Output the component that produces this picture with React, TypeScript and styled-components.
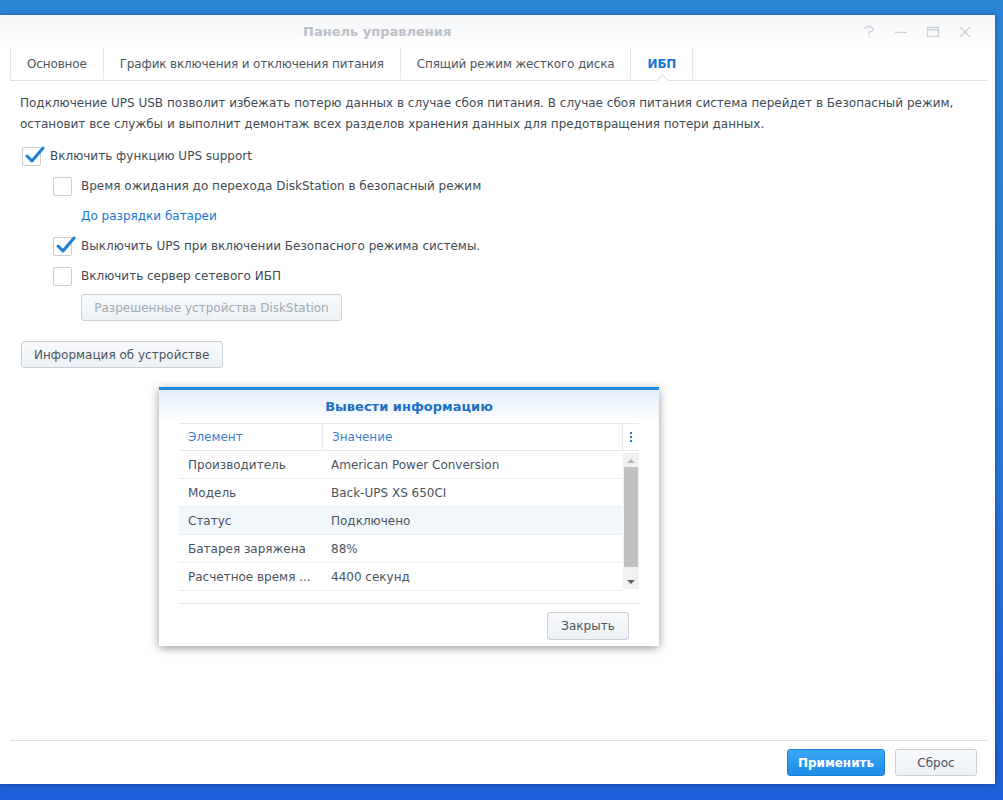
import React from 'react';
import styled, { createGlobalStyle, css } from 'styled-components';

const GlobalStyle = createGlobalStyle`
  html, body {
    margin: 0;
    padding: 0;
  }
  body {
    font-family: 'DejaVu Sans', Verdana, sans-serif;
    font-size: 12px;
    color: #414b55;
  }
  * {
    box-sizing: border-box;
  }
`;

const Desktop = styled.div`
  width: 1003px;
  height: 800px;
  padding: 15px 8px 16px 0;
  background: linear-gradient(180deg, #2b87d8 0%, #2a7ad8 50%, #1f5fd9 100%);
  overflow: hidden;
`;

const Window = styled.div`
  position: relative;
  height: 100%;
  display: flex;
  flex-direction: column;
  background: #fff;
  box-shadow: 0 0 6px rgba(0, 0, 0, 0.35);
`;

const TitleBar = styled.div`
  height: 33px;
  display: flex;
  align-items: center;
  padding-left: 303px;
  padding-right: 14px;
  background: linear-gradient(180deg, #f5f6f8 0%, #ffffff 100%);
`;

const Title = styled.div`
  flex: 1;
  font-weight: bold;
  font-size: 13px;
  color: #b9c0c7;
`;

const Controls = styled.div`
  display: flex;
  align-items: center;
`;

const ControlButton = styled.span`
  width: 32px;
  height: 20px;
  display: flex;
  align-items: center;
  justify-content: center;
  color: #cdd2d7;
`;

const TabBar = styled.div`
  display: flex;
  align-items: flex-end;
  height: 33px;
  margin: 0 8px 0 10px;
  border-bottom: 1px solid #dcdfe3;
`;

const Tab = styled.div<{ $active?: boolean; $first?: boolean }>`
  position: relative;
  height: 31px;
  padding: 0 16px;
  display: flex;
  align-items: center;
  margin-bottom: 1px;
  border-right: 1px solid #e4e7ea;
  white-space: nowrap;
  letter-spacing: -0.15px;
  ${(p) => p.$first && css`border-left: 1px solid #e4e7ea;`}
  color: #4d5761;
  ${(p) =>
    p.$active &&
    css`
      color: #1b74cf;
      font-weight: bold;
      &::after {
        content: '';
        position: absolute;
        left: 50%;
        bottom: -6px;
        width: 8px;
        height: 8px;
        margin-left: -4px;
        background: #fff;
        border-left: 1px solid #dcdfe3;
        border-top: 1px solid #dcdfe3;
        transform: rotate(45deg);
      }
    `}
`;

const Content = styled.div`
  flex: 1;
  padding: 12px 20px 0 20px;
  display: flex;
  flex-direction: column;
  align-items: flex-start;
`;

const Description = styled.p`
  margin: 0 0 6px 0;
  line-height: 21px;
  color: #414b55;
`;

const OptionRow = styled.label<{ $indent?: boolean }>`
  height: 30px;
  display: flex;
  align-items: center;
  gap: 9px;
  padding-left: ${(p) => (p.$indent ? 33 : 2)}px;
  color: #414b55;
`;

const Box = styled.span`
  position: relative;
  width: 19px;
  height: 19px;
  border: 1px solid #c9ced3;
  border-radius: 2px;
  background: #fff;
  flex-shrink: 0;
`;

const Tick = styled.svg`
  position: absolute;
  left: 1px;
  top: -3px;
`;

const LinkRow = styled.div`
  height: 30px;
  display: flex;
  align-items: center;
  padding-left: 61px;
  color: #1a78d0;
`;

const Button = styled.button<{ $primary?: boolean }>`
  height: 27px;
  padding: 0 14px;
  border-radius: 3px;
  font-family: inherit;
  font-size: 12px;
  white-space: nowrap;
  border: 1px solid #c8d0d8;
  background: linear-gradient(180deg, #f8fafc 0%, #edf1f5 100%);
  color: #4b555f;
  ${(p) =>
    p.$primary &&
    css`
      border-color: #1a80d6;
      background: linear-gradient(180deg, #39a6f3 0%, #1f8ce8 100%);
      color: #fff;
      font-weight: bold;
    `}
  &:disabled {
    color: #a3abb3;
  }
`;

const AllowedButton = styled(Button)`
  margin: 3px 0 0 61px;
  min-width: 261px;
  padding: 0 12px;
`;

const InfoButton = styled(Button)`
  margin: 20px 0 0 1px;
  min-width: 201px;
  padding: 0 12px;
`;

const Footer = styled.div`
  margin: 0 8px 0 10px;
  padding: 8px 10px 8px 0;
  border-top: 1px solid #dedfe1;
  display: flex;
  justify-content: flex-end;
  gap: 10px;
`;

const FooterButton = styled(Button)`
  width: ${(p) => (p.$primary ? 98 : 82)}px;
  padding: 0;
`;

/* dialog */

const Dialog = styled.div`
  position: absolute;
  left: 159px;
  top: 372px;
  width: 500px;
  height: 259px;
  background: #fff;
  border-top: 3px solid #1d8ae0;
  box-shadow: 0 2px 9px rgba(0, 0, 0, 0.4);
  display: flex;
  flex-direction: column;
`;

const DialogHeader = styled.div`
  height: 33px;
  display: flex;
  align-items: center;
  justify-content: center;
  background: linear-gradient(180deg, #e2eefa 0%, #ffffff 100%);
  font-weight: bold;
  font-size: 13px;
  color: #1a6fc6;
`;

const Grid = styled.div`
  margin: 0 20px;
  border-top: 1px solid #e6e9ec;
`;

const HeadRow = styled.div`
  height: 27px;
  display: grid;
  grid-template-columns: 143px 300px 1fr;
  border-bottom: 1px solid #e6e9ec;
  color: #3a7fcd;
`;

const HeadCell = styled.div<{ $sep?: boolean }>`
  display: flex;
  align-items: center;
  padding-left: 9px;
  ${(p) => p.$sep && css`border-left: 1px solid #e6e9ec;`}
`;

const MenuCell = styled.div`
  display: flex;
  align-items: center;
  justify-content: center;
  border-left: 1px solid #e6e9ec;
  color: #1e78d2;
`;

const Body = styled.div`
  display: flex;
  height: 140px;
`;

const Rows = styled.div`
  flex: 1;
  min-width: 0;
`;

const Row = styled.div<{ $hl?: boolean }>`
  height: 28px;
  display: grid;
  grid-template-columns: 143px minmax(0, 1fr);
  border-bottom: 1px solid #eceef0;
  background: ${(p) => (p.$hl ? '#f2f7fc' : '#fff')};
  color: #4a545e;
`;

const Cell = styled.div`
  padding-left: 9px;
  line-height: 28px;
  white-space: nowrap;
`;

const ScrollBar = styled.div`
  width: 16px;
  margin: 2px 0 2px 1px;
  background: #f1f1f1;
  display: flex;
  flex-direction: column;
  align-items: center;
`;

const Arrow = styled.div`
  height: 14px;
  display: flex;
  align-items: center;
  justify-content: center;
`;

const Thumb = styled.div`
  width: 14px;
  height: 100px;
  background: #c1c1c1;
`;

const ScrollGap = styled.div`
  flex: 1;
`;

const DialogFooter = styled.div`
  margin: 12px 20px 0 20px;
  padding: 8px 10px 0 0;
  border-top: 1px solid #e0e2e4;
  display: flex;
  justify-content: flex-end;
`;

const CloseButton = styled(Button)`
  width: 82px;
  height: 28px;
  padding: 0;
`;

const Check = ({ checked }: { checked?: boolean }) => (
  <Box>
    {checked && (
      <Tick width="22" height="20" viewBox="0 0 22 20">
        <path d="M3 11 L8 16 L19 3" fill="none" stroke="#1b80d8" strokeWidth="3" strokeLinecap="round" strokeLinejoin="round" />
      </Tick>
    )}
  </Box>
);

const rows = [
  ['Производитель', 'American Power Conversion'],
  ['Модель', 'Back-UPS XS 650CI'],
  ['Статус', 'Подключено'],
  ['Батарея заряжена', '88%'],
  ['Расчетное время ...', '4400 секунд'],
];

const App = () => {
  return (
    <>
      <GlobalStyle />
      <Desktop>
        <Window>
          <TitleBar>
            <Title>Панель управления</Title>
            <Controls>
              <ControlButton>
                <svg width="14" height="14" viewBox="0 0 14 14">
                  <path d="M3 4 Q3 1.5 7 1.5 Q11 1.5 11 4.5 Q11 6.5 7 7 L7 9.5" fill="none" stroke="currentColor" strokeWidth="1.4" />
                  <rect x="6.3" y="11.3" width="1.4" height="1.4" fill="currentColor" />
                </svg>
              </ControlButton>
              <ControlButton>
                <svg width="14" height="14" viewBox="0 0 14 14">
                  <line x1="1" y1="7.5" x2="13" y2="7.5" stroke="currentColor" strokeWidth="1.4" />
                </svg>
              </ControlButton>
              <ControlButton>
                <svg width="14" height="14" viewBox="0 0 14 14">
                  <rect x="1.5" y="2.5" width="11" height="9" fill="none" stroke="currentColor" strokeWidth="1.4" />
                  <line x1="1.5" y1="5" x2="12.5" y2="5" stroke="currentColor" strokeWidth="1.4" />
                </svg>
              </ControlButton>
              <ControlButton>
                <svg width="14" height="14" viewBox="0 0 14 14">
                  <path d="M2 2 L12 12 M12 2 L2 12" stroke="currentColor" strokeWidth="1.4" />
                </svg>
              </ControlButton>
            </Controls>
          </TitleBar>

          <TabBar>
            <Tab $first>Основное</Tab>
            <Tab>График включения и отключения питания</Tab>
            <Tab>Спящий режим жесткого диска</Tab>
            <Tab $active>ИБП</Tab>
          </TabBar>

          <Content>
            <Description>
              Подключение UPS USB позволит избежать потерю данных в случае сбоя питания. В случае сбоя питания система перейдет в Безопасный режим,
              <br />
              остановит все службы и выполнит демонтаж всех разделов хранения данных для предотвращения потери данных.
            </Description>
            <OptionRow>
              <Check checked />
              Включить функцию UPS support
            </OptionRow>
            <OptionRow $indent>
              <Check />
              Время ожидания до перехода DiskStation в безопасный режим
            </OptionRow>
            <LinkRow>До разрядки батареи</LinkRow>
            <OptionRow $indent>
              <Check checked />
              Выключить UPS при включении Безопасного режима системы.
            </OptionRow>
            <OptionRow $indent>
              <Check />
              Включить сервер сетевого ИБП
            </OptionRow>
            <AllowedButton disabled>Разрешенные устройства DiskStation</AllowedButton>
            <InfoButton>Информация об устройстве</InfoButton>
          </Content>

          <Footer>
            <FooterButton $primary>Применить</FooterButton>
            <FooterButton>Сброс</FooterButton>
          </Footer>

          <Dialog>
            <DialogHeader>Вывести информацию</DialogHeader>
            <Grid>
              <HeadRow>
                <HeadCell>Элемент</HeadCell>
                <HeadCell $sep>Значение</HeadCell>
                <MenuCell>
                  <svg width="4" height="12" viewBox="0 0 4 12">
                    <rect x="1" y="1" width="2" height="2" fill="currentColor" />
                    <rect x="1" y="5" width="2" height="2" fill="currentColor" />
                    <rect x="1" y="9" width="2" height="2" fill="currentColor" />
                  </svg>
                </MenuCell>
              </HeadRow>
              <Body>
                <Rows>
                  {rows.map(([name, value], i) => (
                    <Row key={name} $hl={i === 2}>
                      <Cell>{name}</Cell>
                      <Cell>{value}</Cell>
                    </Row>
                  ))}
                </Rows>
                <ScrollBar>
                  <Arrow>
                    <svg width="8" height="5" viewBox="0 0 8 5">
                      <path d="M0 5 L4 1 L8 5 Z" fill="#b5b5b5" />
                    </svg>
                  </Arrow>
                  <Thumb />
                  <ScrollGap />
                  <Arrow>
                    <svg width="8" height="5" viewBox="0 0 8 5">
                      <path d="M0 0 L4 4 L8 0 Z" fill="#606060" />
                    </svg>
                  </Arrow>
                </ScrollBar>
              </Body>
            </Grid>
            <DialogFooter>
              <CloseButton>Закрыть</CloseButton>
            </DialogFooter>
          </Dialog>
        </Window>
      </Desktop>
    </>
  );
};

export default App;
